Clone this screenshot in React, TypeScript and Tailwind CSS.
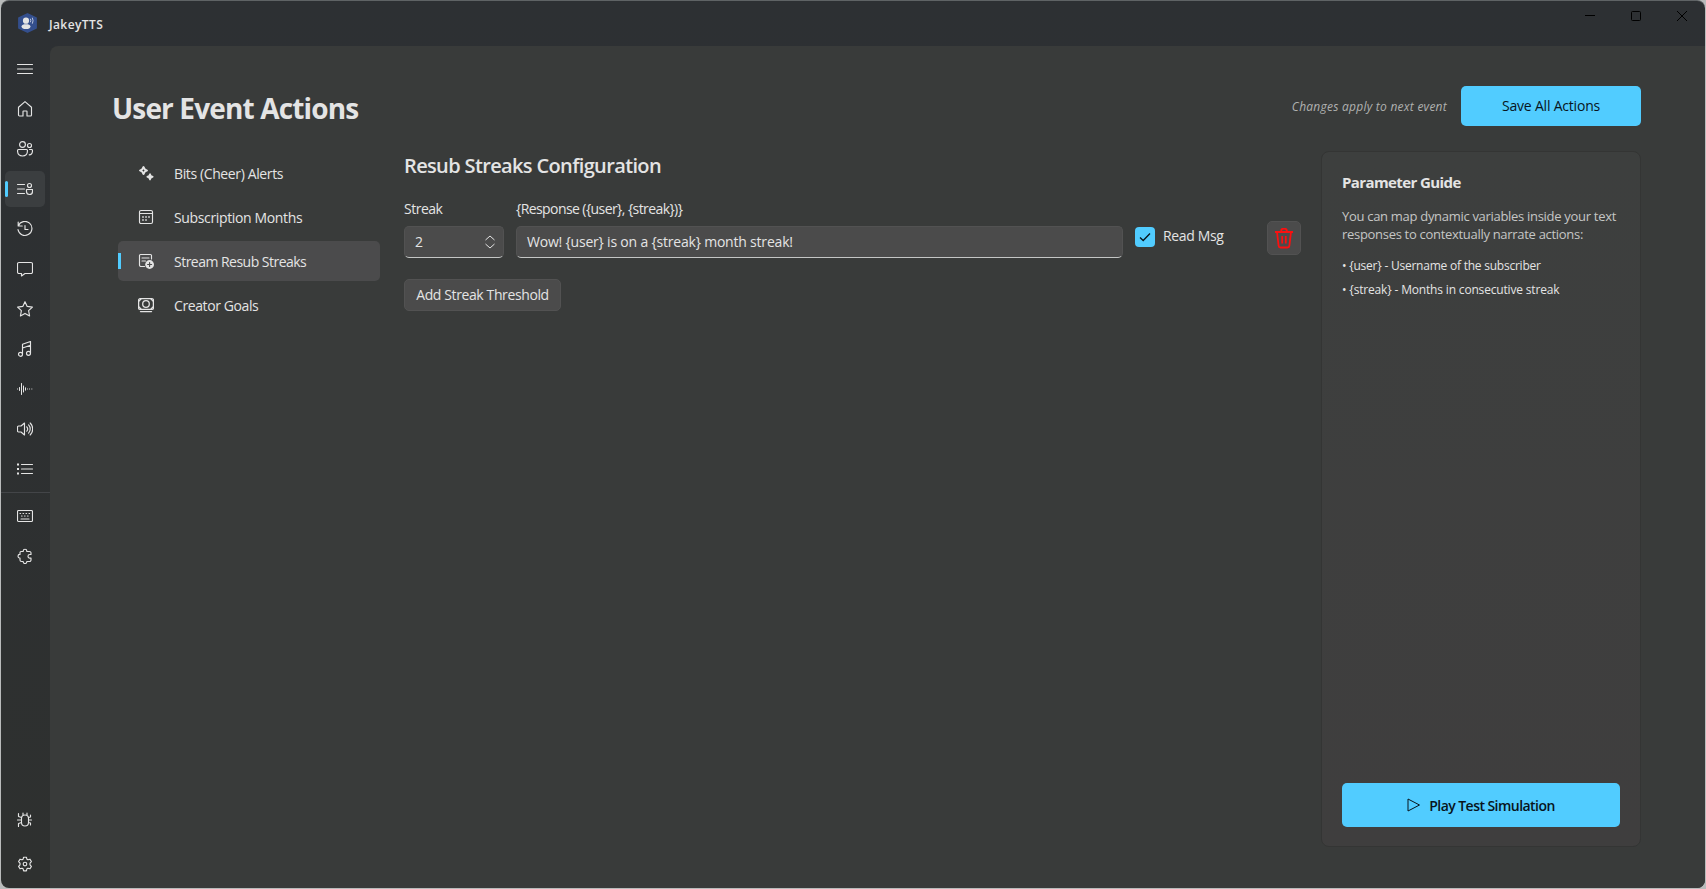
import React from 'react'
import clsx from 'clsx'

const Icon = ({ children, size = 16 }: { children: React.ReactNode; size?: number }) => (
  <svg
    width={size}
    height={size}
    viewBox="0 0 16 16"
    fill="none"
    stroke="currentColor"
    strokeWidth="1.15"
    strokeLinecap="round"
    strokeLinejoin="round"
    className="shrink-0"
  >
    {children}
  </svg>
)

const icons = {
  menu: <path d="M.5 3.5h15M.5 8h15M.5 12.5h15" />,
  home: <path d="M1.5 6.2 8 .6l6.5 5.6V14a1 1 0 0 1-1 1H10v-4.500a.5.5 0 0 0-.5-.5h-3a.5.5 0 0 0-.5.5V15H2.500a1 1 0 0 1-1-1z" />,
  people: (
    <>
      <circle cx="5.500" cy="3.500" r="2.900" />
      <circle cx="12.500" cy="4.500" r="2" />
      <path d="M1.500 8.500h8a1 1 0 0 1 1 1c0 3.500-2 5.500-5 5.500s-5-2-5-5.500a1 1 0 0 1 1-1zM12.500 8.500h2a1 1 0 0 1 1 1c0 3-1 4.300-3.300 4.300" />
    </>
  ),
  userList: (
    <>
      <path d="M.5 3.500h7M.5 8h7M.5 12.500h7" />
      <circle cx="12.500" cy="4.500" r="2" />
      <path d="M9.500 8.500h6v2c0 2-1 3-3 3s-3-1-3-3z" />
    </>
  ),
  history: <path d="M1.200 1v4h4M1.400 4.900A7 7 0 1 1 1 8.500M8 4.500v4h3" />,
  chat: <path d="M2 1.500h12A1.500 1.500 0 0 1 15.500 3v8a1.500 1.500 0 0 1-1.500 1.500H8L4.500 15v-2.500H2A1.500 1.500 0 0 1 .5 11V3A1.500 1.500 0 0 1 2 1.500z" />,
  star: <path d="m8 .7 2.200 4.700 5.200.7-3.800 3.600 1 5.300L8 12.400 3.400 15l1-5.300L.6 6.100l5.200-.7z" />,
  music: (
    <>
      <circle cx="3.500" cy="13.300" r="2" />
      <circle cx="11.500" cy="12.300" r="2" />
      <path d="M5.500 13V3.300l8-2.800V12M5.500 7l8-2.800" />
    </>
  ),
  wave: <path d="M.5 8h.1M2.500 6.500v3M4.500 2.500v11M6.500 5v6M8.500 6.800v2.400M10.500 8h.1M12.500 8h.1M14.800 8h.1" strokeWidth="1" />,
  speaker: <path d="M.5 6a1 1 0 0 1 1-1H4l3.500-3v12L4 11H1.500a1 1 0 0 1-1-1zM9.800 5.800a3.500 3.500 0 0 1 0 4.400M11.600 3.900a6 6 0 0 1 0 8.200M13.200 2a8.500 8.500 0 0 1 0 12" />,
  list: (
    <>
      <path d="M4.500 3.500h11M4.500 8h11M4.500 12.500h11" />
      <path d="M0 3.500h2M0 8h2M0 12.500h2" strokeWidth="2" strokeLinecap="butt" />
    </>
  ),
  keyboard: (
    <>
      <rect x=".5" y="2.500" width="15" height="11" rx="1" />
      <path d="M3 5.500h.6M6 5.500h.6M9 5.500h.6M12 5.500h.6M4.500 8h.6M7.500 8h.6M10.500 8h.6M4 11h8" />
    </>
  ),
  puzzle: <path d="M4 3.500h2.200V3a1.800 1.800 0 0 1 3.600 0v.5h2.700A1.500 1.500 0 0 1 14 5v1.500h-1.200a1.800 1.800 0 0 0 0 3.600H14V12a1.500 1.500 0 0 1-1.500 1.500H9.800v.2a1.800 1.800 0 0 1-3.600 0v-.2H4.500A1.500 1.500 0 0 1 3 12v-2h-.2a1.800 1.800 0 0 1 0-3.600H3V4.500a1 1 0 0 1 1-1z" />,
  bug: <path d="M4.500 6.500a3.500 3.500 0 0 1 7 0v4a3.500 3.500 0 0 1-7 0zM6 3.500V1M10 3.500V1M.5 8h4M11.500 8h3M4.500 5.500 1.500 4.500V1.500M11.500 5.500l2-.5V3M4.500 10.500l-3 1v3M11.500 10.500l2 .5v2" />,
  gear: (
    <>
      <circle cx="8" cy="8" r="1.800" />
      <path d="m6.600 1.200 2.800 0 .5 2 1.100.6 2-.6 1.400 2.400L13 7.100v1.800l1.400 1.500-1.400 2.400-2-.6-1.100.6-.5 2H6.600l-.5-2-1.100-.6-2 .6-1.400-2.400L3 8.900V7.100L1.600 5.600 3 3.200l2 .6 1.100-.6z" />
    </>
  ),
  sparkle: (
    <>
      <path d="m5.500 2 1.200 2.300L9 5.500 6.700 6.700 5.500 9 4.300 6.700 2 5.500l2.300-1.200z" strokeWidth="1.900" />
      <path d="m12 9 .9 1.900 1.900.9-1.900.9-.9 1.900-.9-1.900-1.900-.9 1.900-.9z" fill="currentColor" strokeWidth="1.500" />
    </>
  ),
  calendar: (
    <>
      <rect x="1.500" y="1.500" width="13" height="13" rx="1.500" />
      <path d="M1.500 4.500h13" />
      <path d="M4.200 8h1.600M7.200 8h1.600M10.200 8h1.600M4.200 11h1.600M7.200 11h1.600" strokeWidth="1.700" strokeLinecap="butt" />
    </>
  ),
  noteAdd: (
    <>
      <path d="M6.500 13.500H3A1.500 1.500 0 0 1 1.500 12V2.500a1 1 0 0 1 1-1h10a1 1 0 0 1 1 1V6M4 5h7M4 8h3.500" />
      <circle cx="11.600" cy="11.500" r="4.400" fill="currentColor" stroke="none" />
      <path d="M11.600 9.500v4M9.600 11.500h4" stroke="#4b4b4c" />
    </>
  ),
  camera: (
    <>
      <rect x=".6" y="1.700" width="14.800" height="10.600" rx="1.500" strokeWidth="1.300" />
      <circle cx="8" cy="7" r="3.300" strokeWidth="1.300" />
      <path d="M2.500 14.600h11" strokeWidth="1.400" />
      <path d="M1 4.200 3 2M15 4.200 13 2M1 9.800 3 12M15 9.800 13 12" />
    </>
  ),
}

type IconName = keyof typeof icons

const railItems: IconName[] = ['menu', 'home', 'people', 'userList', 'history', 'chat', 'star', 'music', 'wave', 'speaker', 'list']

const sections: { label: string; icon: IconName; tracking: string }[] = [
  { label: 'Bits (Cheer) Alerts', icon: 'sparkle', tracking: 'tracking-[-0.38px]' },
  { label: 'Subscription Months', icon: 'calendar', tracking: 'tracking-[-0.36px]' },
  { label: 'Stream Resub Streaks', icon: 'noteAdd', tracking: 'tracking-[-0.52px]' },
  { label: 'Creator Goals', icon: 'camera', tracking: 'tracking-[-0.4px]' },
]

const fieldClass = 'flex h-8 items-center rounded-[5px] border border-[#525252] border-b-[#c4c6c5] bg-[#4b4b4b] px-2.5 text-sm'

const RailButton = ({ name, active }: { name: IconName; active?: boolean }) => (
  <button className={clsx('relative flex h-9 w-10 items-center justify-center rounded-[5px]', active && 'bg-[#3b3e40]')}>
    {active && <span className="absolute left-0 top-2.5 h-4 w-[3px] rounded-full bg-[#51ccff]" />}
    <Icon>{icons[name]}</Icon>
  </button>
)

export default function App() {
  return (
    <div className="h-[889px] w-[1706px] overflow-hidden bg-[#b9bbbb] px-px pb-px font-['Open_Sans',sans-serif] text-[#e4e4e4]">
      <div className="flex h-full flex-col overflow-hidden rounded-lg border-t border-[#5f6365] bg-linear-to-b from-[#2d3033] to-[#2e302f]">
        {/* Title bar */}
        <header className="flex h-[45px] shrink-0 justify-between">
          <div className="flex items-center pb-0.5 pl-[17px]">
            <svg width="19" height="20" viewBox="0 0 19 20">
              <path d="M9.500 1 18 5v10l-8.500 4L1 15V5z" fill="#344f8d" stroke="#344f8d" strokeWidth="1.800" strokeLinejoin="round" />
              <circle cx="8" cy="7.700" r="3.100" fill="#e4e4e4" />
              <path d="M3.500 13.400c0-1.600 2-2.200 4.500-2.200s4.500.6 4.500 2.200-2 2.600-4.500 2.600-4.500-1-4.500-2.600z" fill="#e4e4e4" />
              <path d="M12.300 5.700q1 1.800 0 3.600M14.300 4.700q1.500 3 0 6" fill="none" stroke="#b9c3dc" />
            </svg>
            <span className="ml-3 mt-1 text-xs font-semibold tracking-[0.4px]">JakeyTTS</span>
          </div>
          <div className="flex items-start gap-9 pr-[18px] pt-[9px] text-black">
            <svg width="10" height="12" viewBox="0 0 10 12" stroke="currentColor">
              <path d="M0 5.500h10" />
            </svg>
            <svg width="10" height="12" viewBox="0 0 10 12" fill="none" stroke="currentColor">
              <rect x=".5" y="1.500" width="9" height="9" rx="1" />
            </svg>
            <svg width="10" height="12" viewBox="0 0 10 12" stroke="currentColor">
              <path d="m0 1 10 10M10 1 0 11" />
            </svg>
          </div>
        </header>

        <div className="flex min-h-0 flex-1">
          {/* Icon rail */}
          <nav className="flex w-[49px] shrink-0 flex-col pt-[5px]">
            <div className="flex flex-col gap-1 pl-1">
              {railItems.map((name) => (
                <RailButton key={name} name={name} active={name === 'userList'} />
              ))}
            </div>
            <div className="my-[5px] h-px bg-[#434548]" />
            <div className="flex flex-col gap-1 pl-1">
              <RailButton name="keyboard" />
              <RailButton name="puzzle" />
            </div>
            <div className="mt-auto flex flex-col gap-2 pb-[6px] pl-1">
              <RailButton name="bug" />
              <RailButton name="gear" />
            </div>
          </nav>

          {/* Page */}
          <main className="flex flex-1 flex-col rounded-tl-lg bg-[#393b3a] pl-[63px] pr-16 pt-10">
            <div className="flex h-10 items-center justify-between">
              <h1 className="-ml-px pt-1 text-[28px] font-bold tracking-[-0.85px]">User Event Actions</h1>
              <div className="flex items-center">
                <span className="mr-3.5 pt-0.5 text-xs italic tracking-[0.25px] text-[#b0b1b0]">Changes apply to next event</span>
                <button className="h-10 w-[180px] rounded-[5px] bg-[#51ccff] text-sm tracking-[-0.2px] text-[#08151c]">
                  Save All Actions
                </button>
              </div>
            </div>

            <div className="mt-[25px] flex">
              {/* Section list */}
              <div className="ml-[5px] mt-0.5 flex w-[262px] flex-col gap-1">
                {sections.map(({ label, icon, tracking }) => {
                  const active = icon === 'noteAdd'
                  return (
                    <button key={label} className={clsx('relative flex h-10 items-center rounded-[5px] pl-5', active && 'bg-[#4b4b4c]')}>
                      {active && <span className="absolute left-0 top-3 h-4 w-[3px] bg-[#51ccff]" />}
                      <Icon>{icons[icon]}</Icon>
                      <span className={clsx('ml-5 pt-0.5 text-sm', tracking)}>{label}</span>
                    </button>
                  )
                })}
              </div>

              {/* Configuration */}
              <section className="ml-6 w-[897px]">
                <h2 className="pt-px text-xl leading-7 font-semibold tracking-[-0.64px]">Resub Streaks Configuration</h2>
                <div className="mt-[19px] flex text-sm">
                  <span className="w-28 tracking-[-0.5px]">Streak</span>
                  <span className="tracking-[-0.58px]">{'{Response ({user}, {streak})}'}</span>
                </div>
                <div className="flex h-11 items-start pt-[3px]">
                  <div className={clsx(fieldClass, 'mt-1 w-[100px] justify-between')}>
                    <span>2</span>
                    <svg width="12" height="14" viewBox="0 0 12 14" fill="none" stroke="currentColor" className="-mr-[3px]">
                      <path d="m1.500 5 4.500-4 4.500 4M1.500 9l4.500 4 4.500-4" />
                    </svg>
                  </div>
                  <div className={clsx(fieldClass, 'mt-1 ml-3 w-[607px] tracking-[-0.2px]')}>
                    {'Wow! {user} is on a {streak} month streak!'}
                  </div>
                  <span className="ml-3 mt-[5px] flex size-5 items-center justify-center rounded bg-[#51ccff]">
                    <svg width="12" height="10" viewBox="0 0 12 10" fill="none" stroke="#08151c" strokeWidth="1.300">
                      <path d="m1 5.500 3.200 3L11 1.500" />
                    </svg>
                  </span>
                  <span className="ml-2 mt-1 text-sm tracking-[-0.35px]">Read Msg</span>
                  <button className="-mt-px ml-auto flex size-[34px] items-center justify-center rounded-[5px] border border-[#525252] bg-[#4b4b4b] text-[#fb1010]">
                    <svg width="20" height="21" viewBox="0 0 20 21" fill="none" stroke="currentColor" strokeWidth="1.800">
                      <path d="M1 4h18M7 3.500a3 3 0 0 1 6 0M3 4l1.600 13.700A2 2 0 0 0 6.500 19.500h7a2 2 0 0 0 1.900-1.800L17 4M8.200 8v7.500M11.800 8v7.500" />
                    </svg>
                  </button>
                </div>
                <button className="mt-4 h-8 w-[157px] rounded-[5px] border border-[#525252] bg-[#4b4b4b] text-sm tracking-[-0.39px]">
                  Add Streak Threshold
                </button>
              </section>

              {/* Guide */}
              <aside className="ml-5 flex h-[696px] w-80 flex-col rounded-lg border border-[#343534] bg-linear-to-b from-[#3d3f3e] to-[#3f3e3e] py-[19px] pl-5 pr-[19px]">
                <h3 className="text-[15px] font-bold tracking-[-0.6px]">Parameter Guide</h3>
                <p className="mt-[13px] text-[13px] leading-[18px] tracking-[-0.3px] whitespace-nowrap text-[#c5c6c5]">
                  You can map dynamic variables inside your text
                  <br />
                  responses to contextually narrate actions:
                </p>
                <ul className="mt-[11px] text-xs leading-6 font-medium">
                  <li className="tracking-[-0.23px]">• {'{user}'} - Username of the subscriber</li>
                  <li className="tracking-[-0.17px]">• {'{streak}'} - Months in consecutive streak</li>
                </ul>
                <button className="mt-auto flex h-11 w-[278px] items-center justify-center rounded-[5px] bg-[#51ccff] text-sm font-semibold tracking-[-0.55px] text-[#08151c]">
                  <svg width="14" height="14" viewBox="0 0 14 14" fill="none" stroke="currentColor" strokeLinejoin="round">
                    <path d="M1 1 12.500 7 1 13z" />
                  </svg>
                  <span className="ml-2 pt-0.5">Play Test Simulation</span>
                </button>
              </aside>
            </div>
          </main>
        </div>
      </div>
    </div>
  )
}
